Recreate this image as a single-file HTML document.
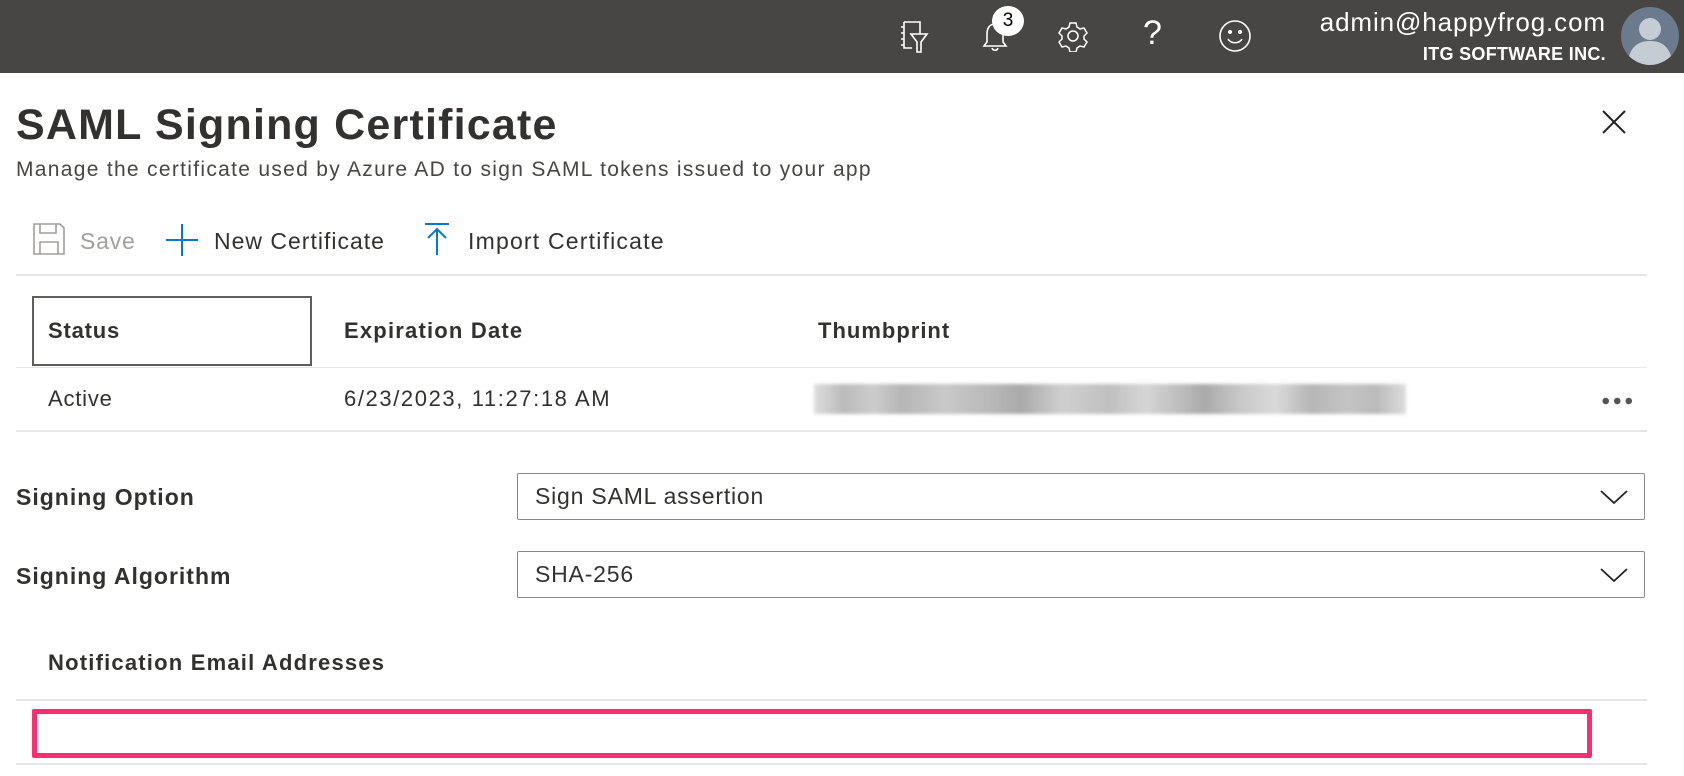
<!DOCTYPE html>
<html><head><meta charset="utf-8"><style>
*{margin:0;padding:0;box-sizing:border-box}
body{width:1684px;height:776px;background:#fff;font-family:"Liberation Sans",sans-serif;color:#323130;position:relative;overflow:hidden}
.hdr{position:absolute;left:0;top:0;width:1684px;height:73px;background:#484644;color:#fff}
.abs{position:absolute;white-space:nowrap}
.line{position:absolute;height:2px;background:#e6e6e6}
.dd{position:absolute;border:1px solid #8a8886;border-radius:2px;font-size:23px;padding-left:17px;display:flex;align-items:center;letter-spacing:0.8px}
.dd svg{position:absolute;right:16px;top:50%;margin-top:-7px}
</style></head><body>
<div class="hdr">
  <svg class="abs" style="left:898px;top:20px" width="32" height="34" viewBox="0 0 32 34" fill="none" stroke="#fff" stroke-width="1.6">
    <path d="M6 2h16v12M6 2v26h8M3 7h3M3 13h3M3 19h3M3 25h3"/><path d="M13 14h16l-6 8v10h-4V22z"/>
  </svg>
  <svg class="abs" style="left:980px;top:18px" width="30" height="36" viewBox="0 0 30 36" fill="none" stroke="#fff" stroke-width="1.6">
    <path d="M15 6c-6 0-8 5-8 10v8l-3 4h22l-3-4v-8c0-5-2-10-8-10zM12 30c1 3 5 3 6 0"/>
  </svg>
  <div class="abs" style="left:992px;top:6px;width:32px;height:30px;border-radius:50%;background:#fff;color:#000;font-size:19px;text-align:center;line-height:30px">3</div>
  <svg class="abs" style="left:1057px;top:20px" width="32" height="32" viewBox="0 0 32 32" fill="none" stroke="#fff" stroke-width="1.5">
    <circle cx="16" cy="16" r="5"/>
    <path d="M13 3h6l1 4 3 2 4-1 3 5-3 3v3l3 3-3 5-4-1-3 2-1 4h-6l-1-4-3-2-4 1-3-5 3-3v-3l-3-3 3-5 4 1 3-2z"/>
  </svg>
  <div class="abs" style="left:1143px;top:14px;font-size:34px;font-weight:300">?</div>
  <svg class="abs" style="left:1218px;top:19px" width="34" height="34" viewBox="0 0 34 34" fill="none" stroke="#fff" stroke-width="1.6">
    <circle cx="17" cy="17" r="15"/><circle cx="12" cy="13" r="1.3" fill="#fff"/><circle cx="22" cy="13" r="1.3" fill="#fff"/><path d="M10 20c3 5 11 5 14 0"/>
  </svg>
  <div class="abs" style="right:78px;top:7px;font-size:26px;letter-spacing:0.9px;text-align:right">admin@happyfrog.com</div>
  <div class="abs" style="right:78px;top:44px;font-size:18px;font-weight:bold;text-align:right;letter-spacing:0.3px">ITG SOFTWARE INC.</div>
  <svg class="abs" style="left:1620px;top:6px" width="60" height="60" viewBox="0 0 60 60">
    <circle cx="30" cy="30" r="29" fill="#6b7a8c"/>
    <circle cx="30" cy="23" r="11" fill="#c6ccd3"/>
    <path d="M9 50c4-12 12-15 21-15s17 3 21 15c-5 5-13 9-21 9s-16-4-21-9z" fill="#c6ccd3"/>
  </svg>
</div>

<div class="abs" style="left:16px;top:101px;font-size:43px;font-weight:bold;letter-spacing:1.2px">SAML Signing Certificate</div>
<div class="abs" style="left:16px;top:158px;font-size:21px;color:#484644;letter-spacing:1.3px">Manage the certificate used by Azure AD to sign SAML tokens issued to your app</div>
<svg class="abs" style="left:1600px;top:108px" width="28" height="28" viewBox="0 0 28 28" stroke="#222" stroke-width="2"><path d="M3 3l22 22M25 3L3 25"/></svg>

<svg class="abs" style="left:32px;top:222px" width="34" height="34" viewBox="0 0 34 34" fill="none" stroke="#a19f9d" stroke-width="1.6"><path d="M2 2h26l4 4v26H2z"/><path d="M8 2v9h16V2M8 32V20h18v12"/></svg>
<div class="abs" style="left:80px;top:228px;font-size:23px;color:#a19f9d;letter-spacing:0.8px">Save</div>
<svg class="abs" style="left:165px;top:223px" width="34" height="34" viewBox="0 0 34 34" stroke="#0078d4" stroke-width="2"><path d="M17 1v32M1 17h32"/></svg>
<div class="abs" style="left:214px;top:228px;font-size:23px;letter-spacing:1px">New Certificate</div>
<svg class="abs" style="left:424px;top:222px" width="26" height="34" viewBox="0 0 26 34" fill="none" stroke="#0078d4" stroke-width="2"><path d="M1 2h24M13 7v26M4 16l9-9 9 9"/></svg>
<div class="abs" style="left:468px;top:228px;font-size:23px;letter-spacing:1.2px">Import Certificate</div>
<div class="line" style="left:16px;top:274px;width:1631px"></div>

<div class="abs" style="left:32px;top:296px;width:280px;height:70px;border:2px solid #605e5c"></div>
<div class="abs" style="left:48px;top:318px;font-size:22px;font-weight:bold;letter-spacing:0.8px">Status</div>
<div class="abs" style="left:344px;top:318px;font-size:22px;font-weight:bold;letter-spacing:1.2px">Expiration Date</div>
<div class="abs" style="left:818px;top:318px;font-size:22px;font-weight:bold;letter-spacing:1px">Thumbprint</div>
<div class="line" style="left:16px;top:367px;width:1631px;height:1px"></div>
<div class="abs" style="left:48px;top:386px;font-size:22px;letter-spacing:0.8px">Active</div>
<div class="abs" style="left:344px;top:386px;font-size:22px;letter-spacing:1.6px">6/23/2023, 11:27:18 AM</div>
<div class="abs" style="left:814px;top:384px;width:592px;height:30px;filter:blur(1.5px);background:linear-gradient(90deg,#ddd,#bbb 5%,#ccc 10%,#b5b5b5 15%,#c9c9c9 22%,#b8b8b8 30%,#aaa 35%,#cfcfcf 42%,#c0c0c0 50%,#d5d5d5 56%,#bcbcbc 62%,#aaa 66%,#c8c8c8 72%,#d9d9d9 78%,#b6b6b6 84%,#c4c4c4 90%,#bbb 95%,#ddd)"></div>
<div class="abs" style="left:1600px;top:397px;width:34px;height:8px;background:radial-gradient(circle,#555 3px,transparent 3.5px) 0 0/11.5px 8px"></div>
<div class="line" style="left:16px;top:430px;width:1631px"></div>

<div class="abs" style="left:16px;top:484px;font-size:23px;font-weight:bold;letter-spacing:1px">Signing Option</div>
<div class="dd" style="left:517px;top:473px;width:1128px;height:47px">Sign SAML assertion<svg width="28" height="14" viewBox="0 0 28 14" fill="none" stroke="#222" stroke-width="1.8"><path d="M1 1l13 12L27 1"/></svg></div>
<div class="abs" style="left:16px;top:563px;font-size:23px;font-weight:bold;letter-spacing:1px">Signing Algorithm</div>
<div class="dd" style="left:517px;top:551px;width:1128px;height:47px">SHA-256<svg width="28" height="14" viewBox="0 0 28 14" fill="none" stroke="#222" stroke-width="1.8"><path d="M1 1l13 12L27 1"/></svg></div>

<div class="abs" style="left:48px;top:650px;font-size:22px;font-weight:bold;letter-spacing:1.2px">Notification Email Addresses</div>
<div class="line" style="left:16px;top:699px;width:1631px"></div>
<div class="abs" style="left:32px;top:709px;width:1560px;height:49px;border:5px solid #ff2d6f;border-radius:2px"></div>
<div class="line" style="left:16px;top:763px;width:1631px"></div>
</body></html>
